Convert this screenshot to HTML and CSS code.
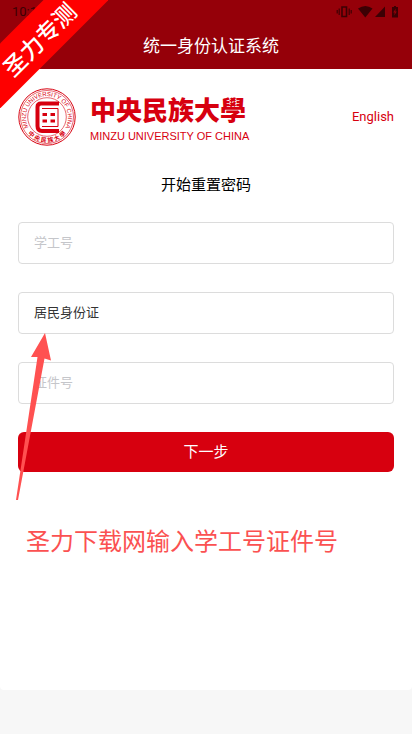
FILE: index.html
```html
<!DOCTYPE html>
<html lang="zh-CN">
<head>
  <meta charset="UTF-8">
  <meta name="viewport" content="width=device-width, initial-scale=1.0">
  <title>统一身份认证系统</title>
  <link rel="stylesheet" href="styles.css">
</head>
<body>
  <header>
    <div class="status-bar">
      <span>10:1</span>
      <svg class="status-icons" width="64" height="14" viewBox="0 0 64 14" aria-hidden="true">
        <path d="M6 2h4.500v9.500H6z" fill="none" stroke="currentColor" stroke-width="1.6"/>
        <path d="M3.200 3.500v6.500M1.200 5v3.500M13.200 3.500v6.500M15.200 5v3.500" stroke="currentColor" stroke-width="1.2"/>
        <path d="M22 3.500Q29.500 -1.500 36.500 3.500L29.300 12.500z" fill="currentColor"/>
        <path d="M49 1.500V12H39z" fill="currentColor"/>
        <path d="M56 2h2V1h2v1h2v10.500h-6z" fill="currentColor"/>
        <path d="M59.800 3.500l-2.600 4h1.500l-.5 3 2.600-4h-1.500z" fill="#950009"/>
      </svg>
    </div>
    <h1>统一身份认证系统</h1>
  </header>

  <main>
    <div class="brand">
      <svg class="seal" width="58" height="58" viewBox="-29 -29 58 58" role="img" aria-label="MINZU UNIVERSITY OF CHINA">
        <defs>
          <path id="ring-top" d="M-18.500 10A21 21 0 1 1 18.500 10"/>
          <path id="ring-bottom" d="M-22 12.500A25.300 25.300 0 0 0 22 12.500"/>
        </defs>
        <circle r="28.200" class="ring"/>
        <circle r="26.500" class="ring thin"/>
        <circle r="19.300" class="ring thin"/>
        <text class="ring-en"><textPath href="#ring-top" startOffset="50%">MINZU UNIVERSITY OF CHINA</textPath></text>
        <text class="ring-cn"><textPath href="#ring-bottom" startOffset="50%">中 央 民 族 大 學</textPath></text>
        <path d="M12 -13.500H-6Q-9.500 -13.500 -9.500 -10V9Q-9.500 14 -5 14H12" class="frame"/>
        <path d="M-5 -8.500H11V9.500H-5" class="frame inner"/>
        <path d="M-4.500 -2.500H0M3.500 -2.500H8M-4.500 4H0M3.500 4H8" class="frame dash"/>
      </svg>
      <div class="wordmark">
        <div class="name-cn">中央民族大學</div>
        <div class="name-en">MINZU UNIVERSITY OF CHINA</div>
      </div>
      <a class="lang" href="#">English</a>
    </div>

    <form>
      <h2>开始重置密码</h2>
      <input type="text" placeholder="学工号" aria-label="学工号">
      <select aria-label="证件类型">
        <option>居民身份证</option>
      </select>
      <input type="text" placeholder="证件号" aria-label="证件号">
      <button type="button">下一步</button>

      <svg class="arrow" width="36" height="168" viewBox="0 0 36 168" aria-hidden="true">
        <path d="M29 0L35 27.500 28.500 25.500 2 167H0L21.500 24 15 24z"/>
      </svg>
    </form>

    <p class="note">圣力下载网输入学工号证件号</p>
  </main>

  <footer></footer>

  <div class="corner"><span>圣力专测</span></div>
</body>
</html>
```
FILE: styles.css
```css
* {
  box-sizing: border-box;
}

body {
  margin: 0;
  min-height: 100vh;
  display: flex;
  flex-direction: column;
  position: relative;
  font-family: Roboto, "Noto Sans CJK SC", sans-serif;
  background-color: #f7f7f7;
  color: #000;
}

header {
  background-color: #950009;
}

.status-bar {
  display: flex;
  justify-content: space-between;
  align-items: center;
  height: 23px;
  padding: 0 12px;
  font-size: 13px;
  color: #3c0004;
}

h1 {
  margin: 0;
  padding-left: 10px;
  font-size: 17px;
  font-weight: 400;
  line-height: 46px;
  text-align: center;
  color: #fff;
}

main {
  flex: 1;
  padding: 18px;
  background-color: #fff;
  border-radius: 0 0 4px 4px;
}

.brand {
  display: flex;
  align-items: center;
  height: 60px;
}

.seal {
  flex: none;
}

.ring {
  fill: none;
  stroke: #d7000f;
  stroke-width: 1;
}

.ring.thin {
  stroke-width: 0.6;
}

.ring-en,
.ring-cn {
  fill: #d7000f;
  text-anchor: middle;
}

.ring-en {
  font: 6px "Liberation Sans", sans-serif;
}

.ring-cn {
  font: bold 6px "Noto Sans CJK TC", sans-serif;
}

.frame {
  fill: none;
  stroke: #d7000f;
  stroke-width: 4;
}

.frame.inner {
  stroke-width: 1;
}

.frame.dash {
  stroke-width: 3;
}

.wordmark {
  margin-left: 14px;
  color: #d7000f;
  white-space: nowrap;
}

.name-cn {
  font-family: "Noto Sans CJK TC", sans-serif;
  font-size: 26px;
  font-weight: 900;
  line-height: 38px;
}

.name-en {
  font-family: "Liberation Sans", sans-serif;
  font-size: 11px;
  line-height: 16px;
}

.lang {
  margin-left: auto;
  padding-bottom: 2px;
  font-size: 13px;
  color: #d7000f;
  text-decoration: none;
}

form {
  position: relative;
  display: flex;
  flex-direction: column;
  gap: 28px;
}

h2 {
  margin: 29px 0 0;
  font-size: 15px;
  font-weight: 400;
  line-height: 18px;
  text-align: center;
}

input,
select {
  width: 100%;
  height: 42px;
  padding: 0 15px 2px;
  border: 1px solid #dcdcdc;
  border-radius: 4px;
  background-color: #fff;
  font-family: inherit;
  font-size: 13px;
  color: #333;
  appearance: none;
}

input::placeholder {
  color: #c5c6ca;
}

form button {
  height: 40px;
  padding: 0 0 4px;
  border: none;
  border-radius: 6px;
  background-color: #d7000f;
  font-family: inherit;
  font-size: 15px;
  color: #fff;
}

.arrow {
  position: absolute;
  left: -2px;
  bottom: -29px;
  fill: #ff5151;
}

.note {
  margin: 52px 8px 0;
  font-size: 24px;
  line-height: 36px;
  color: #fb5151;
}

footer {
  height: 44px;
}

/* ribbon over the top left corner */
.corner {
  position: absolute;
  top: 0;
  left: 0;
  width: 108px;
  height: 108px;
  overflow: hidden;
}

.corner span {
  position: absolute;
  top: 15px;
  left: -62px;
  width: 200px;
  padding-top: 8px;
  font-size: 23px;
  font-weight: 500;
  line-height: 38px;
  text-align: center;
  color: #fff;
  background-color: #fe0000;
  transform: rotate(-45deg);
}
```
